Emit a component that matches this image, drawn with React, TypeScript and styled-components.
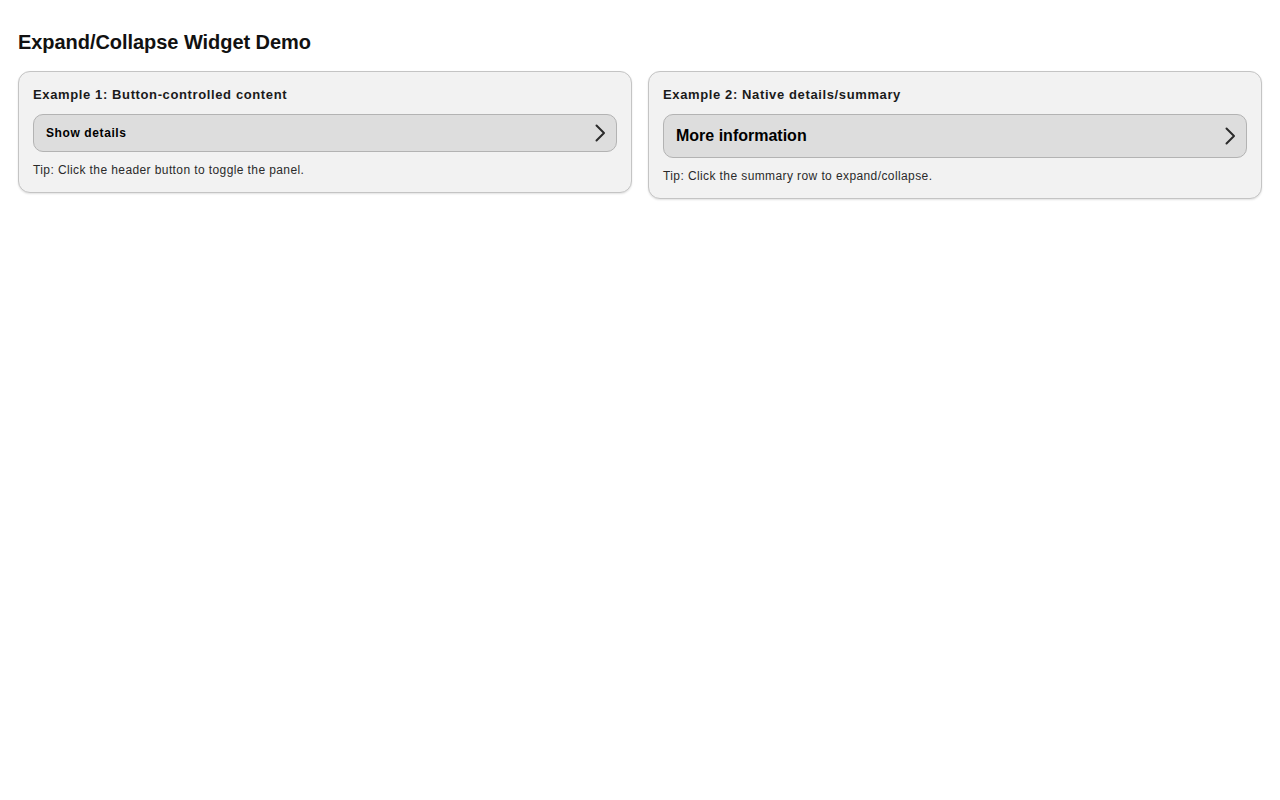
import styled, { createGlobalStyle } from "styled-components";
import { useState } from "react";

const GlobalStyle = createGlobalStyle`
    html, body {
        margin: 0;
        padding: 0;
        background: #ffffff;
        color: #111111;
        font-family: "Liberation Sans", Arial, sans-serif;
    }
`;

const Page = styled.main`
    padding: 28px 18px;
`;

const Title = styled.h1`
    margin: 0 0 15px 0;
    font-size: 20px;
    line-height: 28px;
    font-weight: 700;
    letter-spacing: -0.05px;
`;

const Grid = styled.div`
    display: grid;
    grid-template-columns: 1fr 1fr;
    gap: 16px;
    align-items: start;
`;

const Card = styled.section`
    background: #f2f2f2;
    border: 1px solid #c4c4c4;
    border-radius: 12px;
    padding: 14px;
    box-shadow: 0 1px 2px rgba(0, 0, 0, 0.12);
`;

const CardTitle = styled.h2`
    margin: 0 0 10px 0;
    font-size: 13px;
    line-height: 18px;
    font-weight: 700;
    letter-spacing: 0.62px;
    color: #1a1a1a;
`;

const Toggle = styled.button<{ $big?: boolean }>`
    display: flex;
    align-items: center;
    justify-content: space-between;
    width: 100%;
    box-sizing: border-box;
    margin: 0;
    padding: ${(p) => (p.$big ? "11px 10px 11px 12px" : "9px 10px 9px 12px")};
    background: #dddddd;
    border: 1px solid #b3b3b3;
    border-radius: 10px;
    font-family: inherit;
    font-size: ${(p) => (p.$big ? "16px" : "12px")};
    line-height: ${(p) => (p.$big ? "20px" : "16px")};
    letter-spacing: ${(p) => (p.$big ? "0px" : "0.6px")};
    font-weight: 700;
    color: #000000;
    text-align: left;
    cursor: pointer;
`;

const Details = styled.details`
    summary {
        list-style: none;
    }
    summary::-webkit-details-marker {
        display: none;
    }
`;

const Panel = styled.div`
    margin-top: 10px;
    font-size: 13px;
    color: #222;
`;

const Tip = styled.p`
    margin: 10px 0 0 0;
    font-size: 12px;
    line-height: 16px;
    letter-spacing: 0.4px;
    color: #2a2a2a;
`;

const Chevron = styled.svg<{ $open?: boolean }>`
    flex: none;
    width: 12px;
    height: 18px;
    transform: rotate(${(p) => (p.$open ? "90deg" : "0deg")});
    transition: transform 0.15s ease;
`;

function Arrow({ open }: { open?: boolean }) {
    return (
        <Chevron $open={open} viewBox="0 0 12 18" fill="none">
            <path d="M2.5 1.5 L10 9 L2.5 16.5" stroke="#2b2b2b" strokeWidth="2" strokeLinecap="round" strokeLinejoin="round" />
        </Chevron>
    );
}

function App() {
    const [open, setOpen] = useState(false);
    const [infoOpen, setInfoOpen] = useState(false);
    return (
        <Page>
            <GlobalStyle />
            <Title>Expand/Collapse Widget Demo</Title>
            <Grid>
                <Card>
                    <CardTitle>Example 1: Button-controlled content</CardTitle>
                    <Toggle aria-expanded={open} onClick={() => setOpen((o) => !o)}>
                        Show details
                        <Arrow open={open} />
                    </Toggle>
                    {open && <Panel>Here are the details you asked for.</Panel>}
                    <Tip>Tip: Click the header button to toggle the panel.</Tip>
                </Card>
                <Card>
                    <CardTitle>Example 2: Native details/summary</CardTitle>
                    <Details onToggle={(e) => setInfoOpen((e.target as HTMLDetailsElement).open)}>
                        <Toggle as="summary" $big>
                            More information
                            <Arrow open={infoOpen} />
                        </Toggle>
                        {infoOpen && <Panel>Some extra information lives here.</Panel>}
                    </Details>
                    <Tip>Tip: Click the summary row to expand/collapse.</Tip>
                </Card>
            </Grid>
        </Page>
    );
}

export default App;
